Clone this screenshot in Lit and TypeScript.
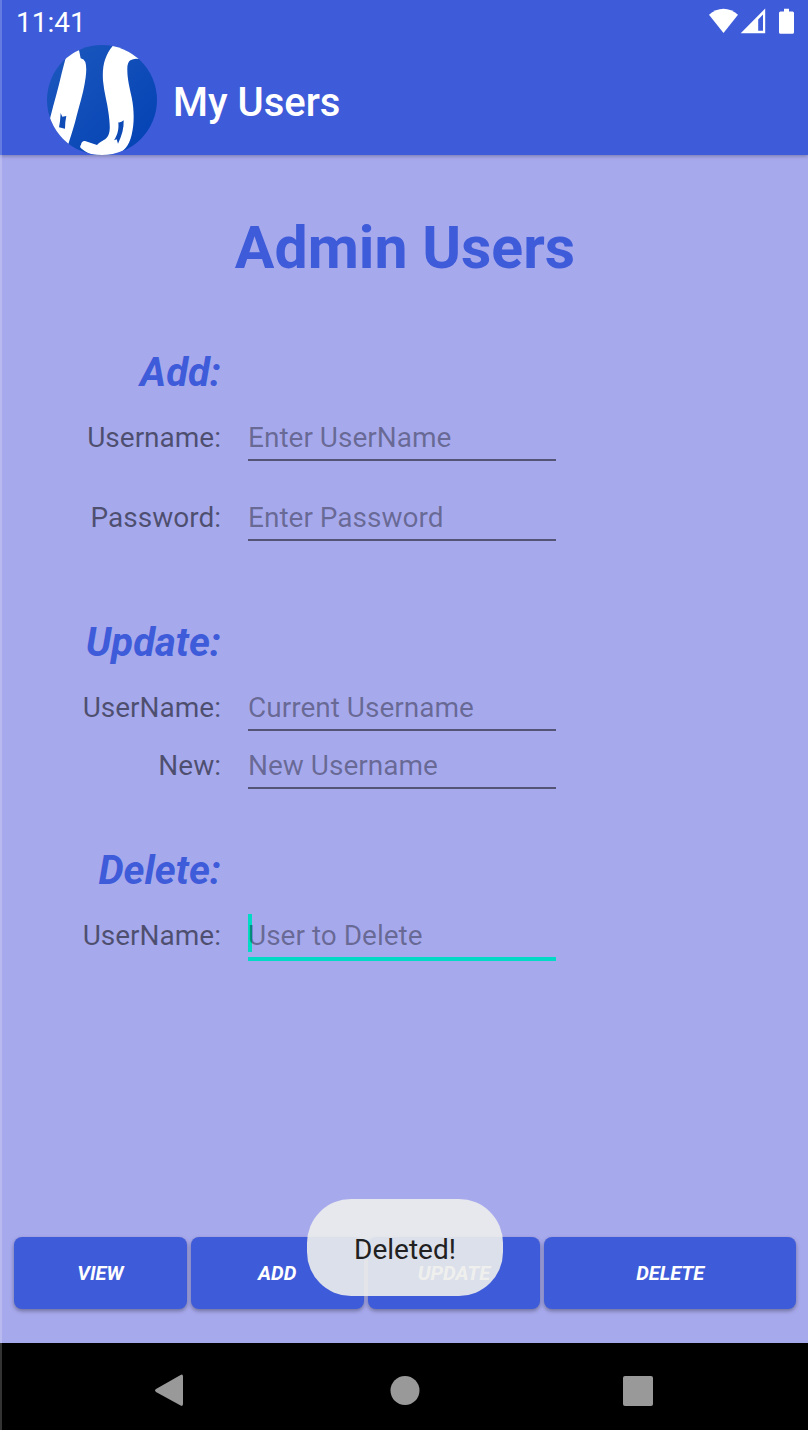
import { LitElement, html, css, svg, nothing } from "lit";
import { customElement, property } from "lit/decorators.js";

interface Field {
  id: string;
  label: string;
  hint: string;
  type?: string;
  active?: boolean;
}

interface Group {
  name: string;
  title: string;
  fields: Field[];
}

const GROUPS: Group[] = [
  {
    name: "add",
    title: "Add:",
    fields: [
      { id: "add-user", label: "Username:", hint: "Enter UserName" },
      { id: "add-pass", label: "Password:", hint: "Enter Password", type: "password" },
    ],
  },
  {
    name: "update",
    title: "Update:",
    fields: [
      { id: "upd-user", label: "UserName:", hint: "Current Username" },
      { id: "upd-new", label: "New:", hint: "New Username" },
    ],
  },
  {
    name: "delete",
    title: "Delete:",
    fields: [{ id: "del-user", label: "UserName:", hint: "User to Delete", active: true }],
  },
];

@customElement("status-bar")
export class StatusBar extends LitElement {
  static styles = css`
    :host {
      display: flex;
      justify-content: space-between;
      align-items: flex-start;
      height: 45px;
      padding: 0 13px 0 16px;
      box-sizing: border-box;
      color: #fff;
    }
    .time {
      font-size: 28px;
      line-height: 46px;
    }
    .icons {
      display: block;
      width: 86px;
      height: 26px;
      margin-top: 8px;
      fill: currentColor;
    }
  `;

  render() {
    return html`
      <span class="time">11:41</span>
      <svg class="icons" viewBox="0 0 86 26" role="img" aria-label="Wi-Fi, signal and battery">
        <path d="M0 6.8 C8.5 -1.3 20.5 -1.3 29 6.8 L14.5 25 Z" />
        <path fill-rule="evenodd" d="M31.7 25.3 L56.2 0.6 V25.3 Z M49.2 11.4 L54 6.6 V22.8 H49.2 Z" />
        <path d="M75 0.8 h5 v2.6 h3.5 a1.5 1.5 0 0 1 1.5 1.5 V24.3 a1.5 1.5 0 0 1 -1.5 1.5 h-12 a1.5 1.5 0 0 1 -1.5 -1.5 V4.9 a1.5 1.5 0 0 1 1.5 -1.5 h3.5 Z" />
      </svg>
    `;
  }
}

@customElement("form-group")
export class FormGroup extends LitElement {
  @property({ attribute: false }) group!: Group;

  static styles = css`
    :host {
      display: block;
    }
    .group {
      display: flex;
      flex-direction: column;
      gap: 10px;
    }
    .add {
      gap: 32px;
    }
    .row {
      display: grid;
      grid-template-columns: 221fr 308fr 225fr;
      column-gap: 27px;
      align-items: start;
    }
    .heading {
      margin: 0 0 16px;
      font-size: 40px;
      line-height: 48px;
      font-weight: 700;
      font-style: italic;
      text-align: right;
      color: #3e5bd9;
    }
    label {
      padding-top: 2px;
      font-size: 28px;
      line-height: 46px;
      text-align: right;
      color: rgba(0, 0, 0, 0.54);
    }
    .field {
      position: relative;
    }
    input {
      position: relative;
      display: block;
      box-sizing: border-box;
      width: 100%;
      height: 48px;
      margin: 0;
      padding: 8px 0 6px;
      border: 0;
      border-bottom: 2px solid rgba(0, 0, 0, 0.5);
      border-radius: 0;
      outline: none;
      background: transparent;
      font: inherit;
      font-size: 28px;
      line-height: 32px;
      color: rgba(0, 0, 0, 0.87);
    }
    input::placeholder {
      color: rgba(0, 0, 0, 0.38);
      opacity: 1;
    }
    .active input {
      height: 50px;
      border-bottom: 4px solid #03dac5;
    }
    .active::before {
      content: "";
      position: absolute;
      left: 0;
      top: 3px;
      width: 4px;
      height: 38px;
      background: #03dac5;
    }
  `;

  render() {
    const g = this.group;
    return html`
      <section>
        <div class="row"><h2 class="heading">${g.title}</h2></div>
        <div class="group ${g.name}">
          ${g.fields.map(
            (f) => html`
              <div class="row">
                <label for=${f.id}>${f.label}</label>
                <div class="field ${f.active ? "active" : nothing}">
                  <input id=${f.id} type=${f.type ?? "text"} placeholder=${f.hint} />
                </div>
              </div>
            `
          )}
        </div>
      </section>
    `;
  }
}

const logo = svg`
  <defs>
    <linearGradient id="disc" x1="0" y1="0" x2="1" y2="1">
      <stop offset="0" stop-color="#1c58bd" />
      <stop offset="1" stop-color="#0241b4" />
    </linearGradient>
    <clipPath id="round"><circle cx="187" cy="180" r="165" /></clipPath>
  </defs>
  <circle cx="187" cy="180" r="165" fill="url(#disc)" />
  <g clip-path="url(#round)">
    <path fill="#fff" d="M78 54 L84 20 L116 20 L123 55 Q133 57 137 66 Q142 82 138 112 C135 138 127 170 117 205 C108 240 100 272 86 312 L80 330 L10 300 L32 232 C44 185 56 145 66 100 Z" />
    <path fill="#0f4cb6" d="M63 219 L68 230 L80 228 L77 246 L76 266 L58 262 L61 244 Z" />
    <path fill="#fff" d="M219 18 L226 5 L320 30 L297 57 Q284 54 272 61 Q262 68 263 90 C263 118 270 142 276 172 C284 212 284 250 276 284 C268 318 252 334 232 342 L186 352 L150 342 Q134 334 124 325 Q119 320 124 314 Q126 302 136 303 L172 315 C187 301 200 300 206 286 C213 270 210 248 207 222 C203 187 193 157 190 122 C187 77 196 46 219 18 Z" />
    <path fill="#0c49b5" d="M236 247 Q245 248 252 241 C253 264 247 286 235 311 L231 298 L223 301 C234 284 238 268 236 247 Z" />
  </g>
`;

@customElement("app-root")
export class AppRoot extends LitElement {
  static styles = css`
    :host {
      position: relative;
      display: flex;
      flex-direction: column;
      min-height: 100vh;
      background: #a7a9ed;
      font-family: Roboto, sans-serif;
    }
    .edge {
      position: absolute;
      top: 0;
      bottom: 0;
      left: 0;
      width: 2px;
      background: rgba(255, 255, 255, 0.2);
      pointer-events: none;
    }
    header {
      background: #3e5bd9;
      box-shadow: 0 1px 4px rgba(0, 0, 0, 0.3);
    }
    .bar {
      display: flex;
      align-items: center;
      gap: 16px;
      padding: 0 47px;
    }
    .logo {
      display: block;
      width: 110px;
      height: 110px;
    }
    .app-name {
      padding-top: 6px;
      font-size: 40px;
      line-height: 48px;
      font-weight: 500;
      color: #fff;
    }
    main {
      position: relative;
      flex: 1;
      display: flex;
      flex-direction: column;
      padding: 57px 0 34px;
    }
    h1 {
      margin: 0 0 65px;
      padding-left: 2px;
      font-size: 59px;
      line-height: 72px;
      font-weight: 700;
      text-align: center;
      color: #3e5bd9;
    }
    .add {
      margin-bottom: 78px;
    }
    .update {
      margin-bottom: 58px;
    }
    .actions {
      display: grid;
      grid-template-columns: 173fr 173fr 173fr 252fr;
      gap: 4px;
      margin-top: auto;
      padding: 0 12px 0 14px;
    }
    .action {
      height: 72px;
      padding: 0;
      border: 0;
      border-radius: 8px;
      background: #3e5bd9;
      box-shadow: 0 2px 4px rgba(0, 0, 0, 0.35);
      font: italic 700 20px/24px Roboto, sans-serif;
      text-transform: uppercase;
      color: #fff;
    }
    .toast-layer {
      position: absolute;
      left: 2px;
      right: 0;
      bottom: 47px;
      display: flex;
      justify-content: center;
      pointer-events: none;
    }
    .toast {
      padding: 34px 47px 30px;
      border-radius: 44px;
      background: rgba(237, 238, 236, 0.9);
      font-size: 28px;
      line-height: 33px;
      color: #212121;
    }
    nav {
      display: grid;
      grid-template-columns: repeat(3, 1fr);
      padding: 7px 52px 0;
      background: #000;
    }
    .nav-key {
      display: flex;
      align-items: center;
      justify-content: center;
      height: 80px;
      padding: 0;
      border: 0;
      background: none;
    }
    .nav-key svg {
      width: 34px;
      height: 34px;
      fill: #999;
    }
  `;

  render() {
    return html`
      <header>
        <status-bar></status-bar>
        <div class="bar">
          <svg class="logo" viewBox="22 15 330 330" aria-hidden="true">${logo}</svg>
          <span class="app-name">My Users</span>
        </div>
      </header>
      <main>
        <h1>Admin Users</h1>
        ${GROUPS.map((g) => html`<form-group class=${g.name} .group=${g}></form-group>`)}
        <div class="actions">
          ${["View", "Add", "Update", "Delete"].map(
            (a) => html`<button class="action" type="button">${a}</button>`
          )}
        </div>
        <div class="toast-layer"><div class="toast" role="status">Deleted!</div></div>
      </main>
      <nav>
        <button class="nav-key" type="button" aria-label="Back">
          <svg viewBox="0 0 34 34"><path d="M4 16.1 L28.6 1.9 Q31 0.9 31 3.5 V31.1 Q31 33.6 28.6 32.6 L4 18.9 Q2 17.5 4 16.1 Z" /></svg>
        </button>
        <button class="nav-key" type="button" aria-label="Home">
          <svg viewBox="0 0 34 34"><circle cx="18" cy="17.5" r="14.5" /></svg>
        </button>
        <button class="nav-key" type="button" aria-label="Recent apps">
          <svg viewBox="0 0 34 34"><rect x="1" y="3" width="30" height="30" rx="2" /></svg>
        </button>
      </nav>
      <div class="edge"></div>
    `;
  }
}
